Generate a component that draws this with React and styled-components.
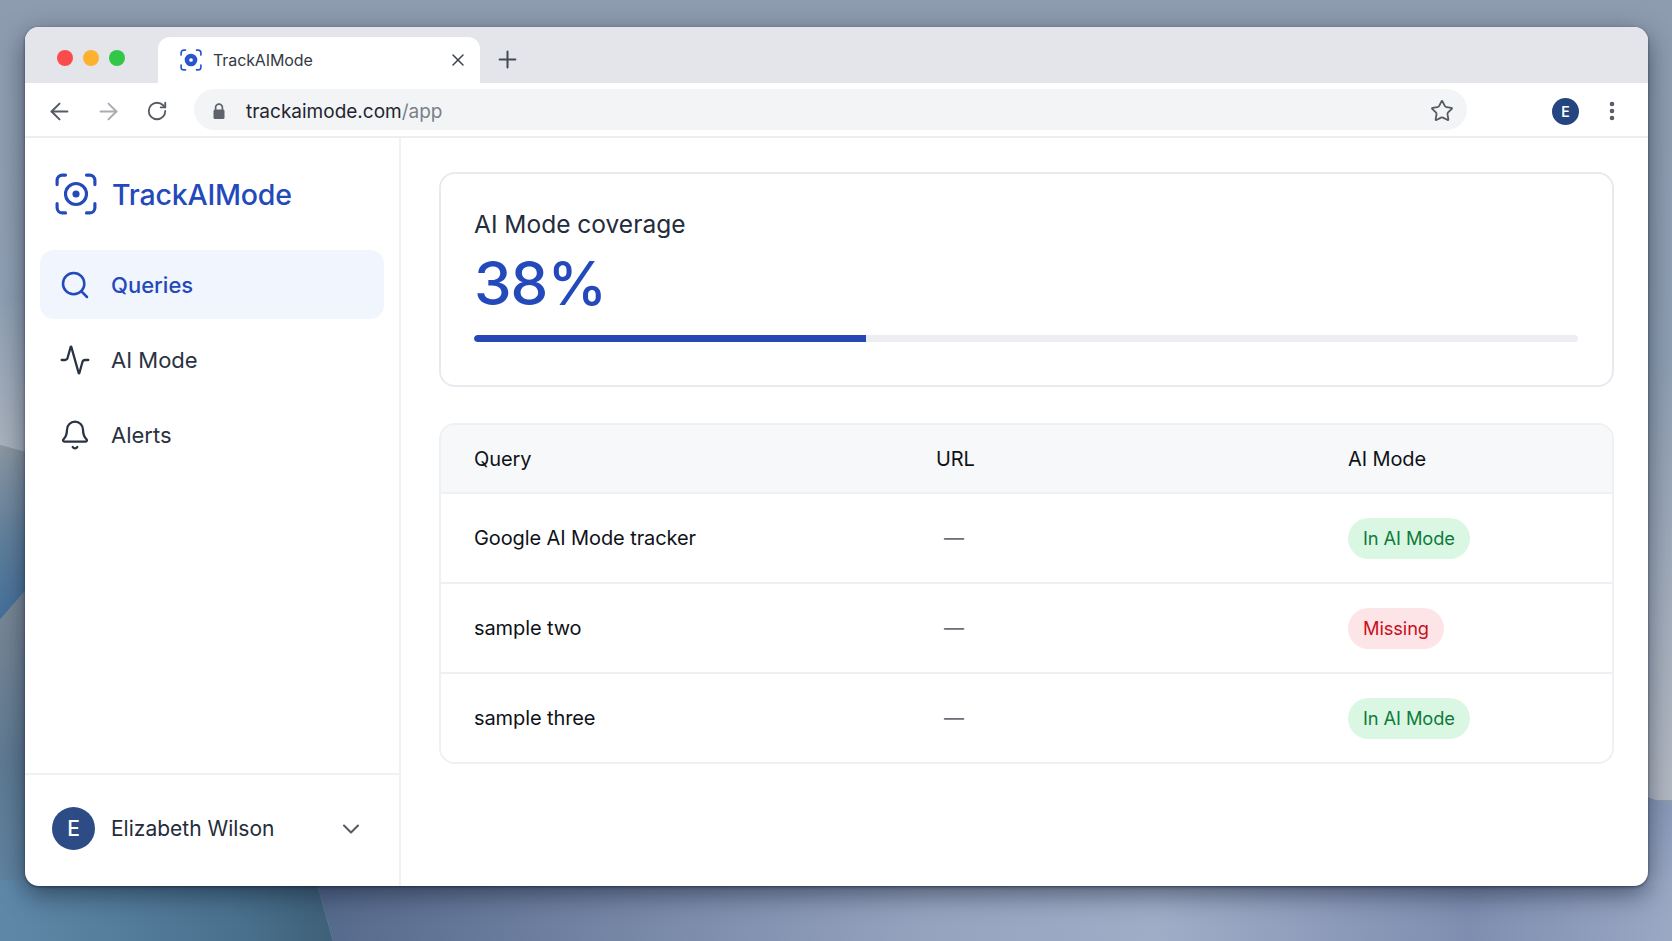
import React from "react";
import styled, { createGlobalStyle } from "styled-components";
import { ArrowLeft, ArrowRight, RotateCw, Star, X, Plus, EllipsisVertical, Search, Activity, Bell, ChevronDown } from "lucide-react";

const Global = createGlobalStyle`
  html, body { margin: 0; padding: 0; }
  body { font-family: Inter, "Liberation Sans", sans-serif; color: #1f2937; }
`;

const Desktop = styled.div`
  position: relative;
  width: 1672px;
  height: 941px;
  overflow: hidden;
  padding: 27px 24px 55px 25px;
  box-sizing: border-box;
  background: #8d9db1;
`;

const Wallpaper = styled.svg`
  position: absolute;
  left: 0;
  top: 0;
`;

const Window = styled.div`
  position: relative;
  height: 100%;
  border-radius: 14px;
  overflow: hidden;
  background: #fff;
  display: flex;
  flex-direction: column;
  box-shadow: 0 8px 26px rgba(12, 22, 42, 0.55), 0 1px 3px rgba(12, 22, 42, 0.55);
`;

const TabStrip = styled.div`
  height: 56px;
  flex: none;
  background: #e3e5ea;
  display: flex;
  align-items: flex-end;
  padding-left: 32px;
`;

const Lights = styled.div`
  display: flex;
  gap: 10px;
  margin-bottom: 17px;
  width: 101px;
`;

const Light = styled.span`
  width: 16px;
  height: 16px;
  border-radius: 50%;
  background: ${(p) => p.$color};
`;

const Tab = styled.div`
  width: 322px;
  height: 46px;
  box-sizing: border-box;
  background: #fff;
  border-radius: 12px 12px 0 0;
  display: flex;
  align-items: center;
  padding: 0 12px 0 22px;
  font-size: 16px;
  letter-spacing: -0.1px;
  color: #333a45;
  svg { flex: none; }
`;

const TabTitle = styled.span`
  flex: 1;
  margin-left: 11px;
`;

const NewTab = styled.div`
  display: flex;
  align-items: center;
  margin: 0 0 10px 14px;
  color: #444b55;
`;

const Toolbar = styled.div`
  height: 55px;
  flex: none;
  box-sizing: border-box;
  border-bottom: 2px solid #eceef1;
  display: flex;
  align-items: center;
  padding: 3px 0 0 22px;
`;

const NavButton = styled.div`
  width: 24px;
  display: flex;
  justify-content: center;
  margin-right: 25px;
  color: ${(p) => (p.$off ? "#a9acb3" : "#555a63")};
  svg { flex: none; }
`;

const Omnibox = styled.div`
  width: 1273px;
  height: 41px;
  margin-top: -3px;
  box-sizing: border-box;
  background: #f3f4f6;
  border-radius: 21px;
  display: flex;
  align-items: center;
  padding: 3px 13px 0 18px;
  font-size: 19px;
  color: #1f2630;
`;

const UrlText = styled.span`
  flex: 1;
  margin-left: 20px;
  span { color: #7a808a; }
`;

const ProfileDot = styled.div`
  width: 27px;
  height: 27px;
  margin-left: 85px;
  border-radius: 50%;
  background: #24457f;
  color: #fff;
  font-size: 14px;
  font-weight: 600;
  display: flex;
  align-items: center;
  justify-content: center;
`;

const MenuButton = styled.div`
  margin-left: 21px;
  display: flex;
  color: #555a63;
`;

const Body = styled.div`
  flex: 1;
  min-height: 0;
  display: flex;
`;

const Sidebar = styled.aside`
  width: 376px;
  flex: none;
  box-sizing: border-box;
  border-right: 2px solid #f0f1f5;
  display: flex;
  flex-direction: column;
`;

const Brand = styled.div`
  display: flex;
  align-items: center;
  gap: 15px;
  padding: 35px 0 0 30px;
  font-size: 28.5px;
  font-weight: 500;
  color: #2449ba;
  letter-spacing: -0.2px;
`;

const Nav = styled.nav`
  flex: 1;
  padding: 35px 15px 0 15px;
  display: flex;
  flex-direction: column;
  gap: 6px;
`;

const NavItem = styled.div`
  height: 69px;
  border-radius: 14px;
  padding-left: 19px;
  display: flex;
  align-items: center;
  gap: 20px;
  font-size: 22px;
  background: ${(p) => (p.$active ? "#f1f5fe" : "transparent")};
  color: ${(p) => (p.$active ? "#2449ba" : "#2a3342")};
  font-weight: ${(p) => (p.$active ? 500 : 400)};
`;

const UserRow = styled.div`
  height: 113px;
  flex: none;
  box-sizing: border-box;
  border-top: 2px solid #f0f1f5;
  display: flex;
  align-items: center;
  padding: 0 34px 4px 27px;
  font-size: 21px;
  color: #232c3b;
`;

const UserAvatar = styled.div`
  width: 43px;
  height: 43px;
  border-radius: 50%;
  background: #2d4c85;
  color: #fff;
  font-size: 21px;
  font-weight: 500;
  display: flex;
  align-items: center;
  justify-content: center;
`;

const UserName = styled.span`
  flex: 1;
  margin-left: 16px;
`;

const Main = styled.main`
  flex: 1;
  padding: 34px 34px 0 38px;
  display: flex;
  flex-direction: column;
  gap: 36px;
`;

const CoverageCard = styled.section`
  height: 215px;
  box-sizing: border-box;
  border: 2px solid #e9eaf0;
  border-radius: 16px;
  padding: 35px 34px 0 33px;
`;

const CoverageLabel = styled.div`
  font-size: 24.5px;
  line-height: 30px;
  color: #232c3b;
`;

const CoverageValue = styled.div`
  font-size: 60px;
  line-height: 72px;
  margin-top: 8px;
  color: #2449ba;
  font-weight: 500;
  letter-spacing: -1px;
`;

const Track = styled.div`
  height: 7px;
  margin-top: 16px;
  border-radius: 4px;
  background: #edeef2;
  overflow: hidden;
`;

const Fill = styled.div`
  height: 100%;
  background: #2748b4;
  border-radius: 4px 0 0 4px;
`;

const TableCard = styled.section`
  border: 2px solid #eef0f4;
  border-radius: 16px;
  overflow: hidden;
`;

const Row = styled.div`
  display: grid;
  grid-template-columns: 462px 412px 1fr;
  align-items: center;
  padding-left: 33px;
  height: ${(p) => (p.$head ? "67px" : "88px")};
  background: ${(p) => (p.$head ? "#f7f8fa" : "#fff")};
  border-top: ${(p) => (p.$first ? "none" : "2px solid #eef0f4")};
  font-size: 20px;
  letter-spacing: -0.1px;
  color: #0f1217;
`;

const Dash = styled.span`
  color: #6b7078;
  margin-left: 8px;
`;

const Pill = styled.span`
  display: inline-flex;
  align-items: center;
  height: 41px;
  padding: 0 15px;
  border-radius: 21px;
  font-size: 18.3px;
  background: ${(p) => (p.$ok ? "#daf7e3" : "#fde4e6")};
  color: ${(p) => (p.$ok ? "#0f7a3c" : "#c8101c")};
`;

const Logo = ({ size, color, dot }) => (
  <svg width={size} height={size} viewBox="0 0 40 40" fill="none" stroke={color} strokeWidth="3" strokeLinecap="round">
    <path d="M10 2H7a5 5 0 0 0-5 5v4M30 2h3a5 5 0 0 1 5 5v4M2 29v4a5 5 0 0 0 5 5h3M38 29v4a5 5 0 0 1-5 5h-3" />
    <circle cx="20" cy="20" r="10" fill={dot ? color : "none"} />
    <circle cx="20" cy="20" r="3.4" fill={dot ? "#fff" : color} stroke="none" />
  </svg>
);

const LockIcon = () => (
  <svg width="14" height="17" viewBox="0 0 14 17" fill="none">
    <path d="M3.6 7V4.6a3.4 3.4 0 0 1 6.8 0V7" stroke="#5f636b" strokeWidth="1.7" />
    <rect x="1.5" y="6.5" width="11" height="9.5" rx="1.5" fill="#5f636b" />
  </svg>
);

const rows = [
  { query: "Google AI Mode tracker", ok: true },
  { query: "sample two", ok: false },
  { query: "sample three", ok: true },
];

export default function App() {
  return (
    <Desktop>
      <Global />
      <Wallpaper width="1672" height="941" viewBox="0 0 1672 941">
        <defs>
          <linearGradient id="top" x1="0" y1="0" x2="0" y2="1">
            <stop offset="0" stopColor="#8e9cb0" />
            <stop offset="0.45" stopColor="#8f9fb3" />
            <stop offset="1" stopColor="#b3b9c3" />
          </linearGradient>
          <linearGradient id="leftTop" x1="0" y1="0" x2="0" y2="1">
            <stop offset="0" stopColor="#8f9fb3" />
            <stop offset="1" stopColor="#a9b2bd" />
          </linearGradient>
          <linearGradient id="leftBlue" x1="0" y1="0" x2="0" y2="1">
            <stop offset="0" stopColor="#8c97a2" />
            <stop offset="0.55" stopColor="#5f7f9c" />
            <stop offset="1" stopColor="#44709a" />
          </linearGradient>
          <linearGradient id="leftLow" x1="0" y1="0" x2="0" y2="1">
            <stop offset="0" stopColor="#7c8896" />
            <stop offset="0.5" stopColor="#5e7a92" />
            <stop offset="1" stopColor="#5f87a8" />
          </linearGradient>
          <linearGradient id="bottomLeft" x1="0" y1="0" x2="1" y2="0">
            <stop offset="0" stopColor="#5f88a8" />
            <stop offset="0.7" stopColor="#4a728f" />
            <stop offset="1" stopColor="#3f6078" />
          </linearGradient>
          <linearGradient id="bottomRight" x1="0" y1="0" x2="1" y2="0">
            <stop offset="0" stopColor="#55698c" />
            <stop offset="0.45" stopColor="#96a3bf" />
            <stop offset="0.62" stopColor="#a0adc7" />
            <stop offset="0.85" stopColor="#7f8db0" />
            <stop offset="1" stopColor="#9aa8c4" />
          </linearGradient>
          <linearGradient id="rightLow" x1="0" y1="0" x2="0" y2="1">
            <stop offset="0" stopColor="#8797b6" />
            <stop offset="1" stopColor="#9aa8c4" />
          </linearGradient>
        </defs>
        <rect width="1672" height="800" fill="url(#top)" />
        <path d="M0 300H26V452C16 449 8 447 0 445Z" fill="url(#leftTop)" />
        <path d="M0 445C8 447 16 449 26 452V590L0 620Z" fill="url(#leftBlue)" />
        <path d="M0 620L26 590V941H0Z" fill="url(#leftLow)" />
        <path d="M0 880H316L333 941H0Z" fill="url(#bottomLeft)" />
        <path d="M316 880H1672V941H333Z" fill="url(#bottomRight)" />
        <path d="M1640 795C1652 798 1662 802 1672 806V885H1640Z" fill="url(#rightLow)" />
      </Wallpaper>
      <Window>
        <TabStrip>
          <Lights>
            <Light $color="#fb4b4b" />
            <Light $color="#fdb22f" />
            <Light $color="#33c748" />
          </Lights>
          <Tab>
            <Logo size={22} color="#2a55d0" dot />
            <TabTitle>TrackAIMode</TabTitle>
            <X size={20} strokeWidth={1.8} color="#3d434d" />
          </Tab>
          <NewTab>
            <Plus size={27} strokeWidth={1.8} />
          </NewTab>
        </TabStrip>
        <Toolbar>
          <NavButton><ArrowLeft size={27} strokeWidth={1.8} /></NavButton>
          <NavButton $off><ArrowRight size={27} strokeWidth={1.8} /></NavButton>
          <NavButton><RotateCw size={22} strokeWidth={2} /></NavButton>
          <Omnibox>
            <LockIcon />
            <UrlText>trackaimode.com<span>/app</span></UrlText>
            <Star size={24} strokeWidth={1.8} color="#555a63" />
          </Omnibox>
          <ProfileDot>E</ProfileDot>
          <MenuButton><EllipsisVertical size={24} strokeWidth={2.6} /></MenuButton>
        </Toolbar>
        <Body>
          <Sidebar>
            <Brand>
              <Logo size={42} color="#2449ba" />
              TrackAIMode
            </Brand>
            <Nav>
              <NavItem $active><Search size={32} strokeWidth={1.9} />Queries</NavItem>
              <NavItem><Activity size={32} strokeWidth={1.7} />AI Mode</NavItem>
              <NavItem><Bell size={32} strokeWidth={1.7} />Alerts</NavItem>
            </Nav>
            <UserRow>
              <UserAvatar>E</UserAvatar>
              <UserName>Elizabeth Wilson</UserName>
              <ChevronDown size={28} strokeWidth={1.8} color="#555a63" />
            </UserRow>
          </Sidebar>
          <Main>
            <CoverageCard>
              <CoverageLabel>AI Mode coverage</CoverageLabel>
              <CoverageValue>38%</CoverageValue>
              <Track><Fill style={{ width: "35.5%" }} /></Track>
            </CoverageCard>
            <TableCard>
              <Row $head $first>
                <span>Query</span>
                <span>URL</span>
                <span>AI Mode</span>
              </Row>
              {rows.map((r) => (
                <Row key={r.query}>
                  <span>{r.query}</span>
                  <Dash>—</Dash>
                  <span><Pill $ok={r.ok}>{r.ok ? "In AI Mode" : "Missing"}</Pill></span>
                </Row>
              ))}
            </TableCard>
          </Main>
        </Body>
      </Window>
    </Desktop>
  );
}
